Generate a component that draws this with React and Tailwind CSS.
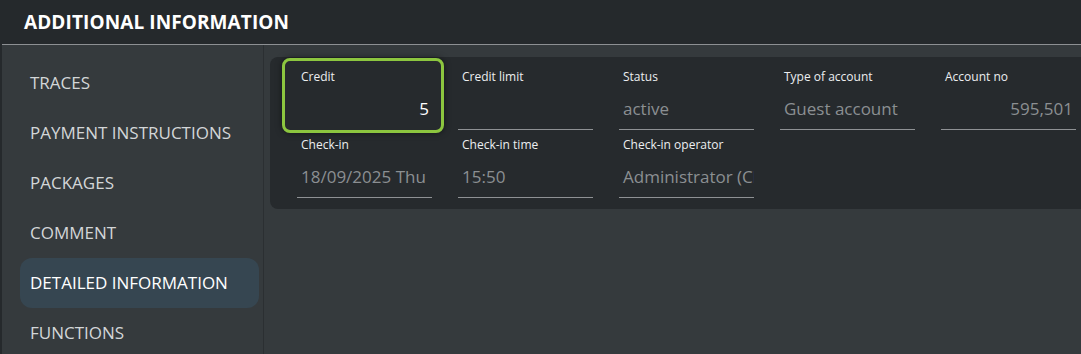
import { useState } from 'react';

const menu = ['Traces', 'Payment instructions', 'Packages', 'Comment', 'Detailed information', 'Functions'];

const fields = [
  { label: 'Credit', value: '5', right: true, strong: true, focus: true },
  { label: 'Credit limit', value: '' },
  { label: 'Status', value: 'active' },
  { label: 'Type of account', value: 'Guest account' },
  { label: 'Account no', value: '595,501', right: true },
  { label: 'Check-in', value: '18/09/2025 Thu' },
  { label: 'Check-in time', value: '15:50' },
  { label: 'Check-in operator', value: 'Administrator (Check-in)' },
];

function Field({ f }) {
  return (
    <div className="relative h-[68px] pl-[15px] pr-[11px]">
      {f.focus && (
        <div className="absolute left-0 right-[-1px] top-[-4px] bottom-[-3px] rounded-lg border-[3px] border-[#8cc63f] shadow-[0_0_6px_rgba(0,0,0,0.5)]" />
      )}
      <div className={`relative flex h-full flex-col ${f.focus ? '' : 'border-b border-[#8e9194]'}`}>
        <span className="pl-1 pt-[7px] text-[12px] leading-4 font-medium text-[#eceef0]">{f.label}</span>
        <span
          className={`mt-[12px] overflow-hidden whitespace-nowrap pl-1 text-[17px] leading-6 ${
            f.right ? 'pr-[3px] text-right' : ''
          } ${f.strong ? 'text-white' : 'text-[#8b8f92]'}`}
        >
          {f.value}
        </span>
      </div>
    </div>
  );
}

export default function App() {
  const [active, setActive] = useState('Detailed information');

  return (
    <div className="flex h-[354px] w-[1081px] flex-col bg-[#25292c] font-['Open_Sans','Noto_Sans',sans-serif]">
      <div className="flex h-[44px] shrink-0 items-center px-6 pt-px">
        <h2 className="m-0 text-[19px] font-bold tracking-[0.1px] text-white uppercase">Additional information</h2>
      </div>
      <div className="flex min-h-0 flex-1 pl-[2px]">
        <div className="flex flex-1 flex-col border-t border-[#8d9093] bg-[#353a3d]">
          <div className="flex min-h-0 flex-1">
            <nav className="flex w-[262px] shrink-0 flex-col border-r border-[#2b2f32] pt-[13px] pl-[18px] pr-[4px]">
              {menu.map((m) => (
                <button
                  key={m}
                  onClick={() => setActive(m)}
                  className={`flex h-[50px] shrink-0 items-center rounded-xl px-[10px] text-left text-[17px] uppercase ${
                    active === m ? 'bg-[#364651] text-white' : 'text-[#d3d6d8]'
                  }`}
                >
                  {m}
                </button>
              ))}
            </nav>
            <div className="min-w-0 flex-1 pt-[12px] pl-[6px]">
              <div className="rounded-l-lg bg-[#262a2d] pt-[5px] pb-[11px] pl-[12px]">
                <div className="grid grid-cols-[repeat(5,161px)]">
                  {fields.map((f) => (
                    <Field key={f.label} f={f} />
                  ))}
                </div>
              </div>
            </div>
          </div>
        </div>
      </div>
    </div>
  );
}
